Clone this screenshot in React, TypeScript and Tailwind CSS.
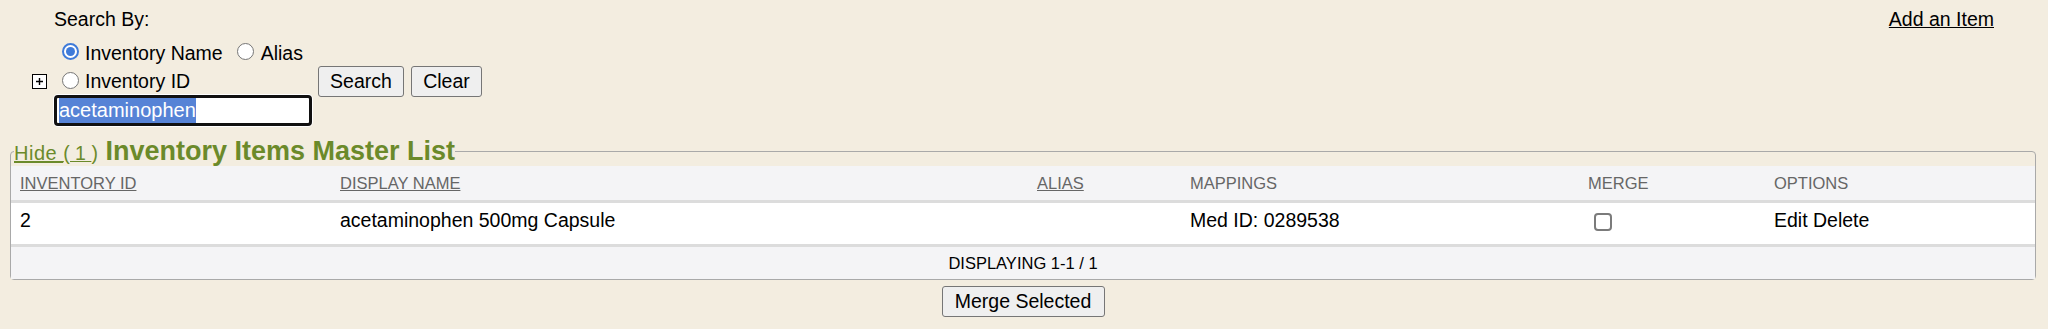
import React from "react";

const Radio = ({ checked }: { checked?: boolean }) =>
  checked ? (
    <span className="inline-flex w-[17px] h-[17px] rounded-full border-[2px] border-[#3f7bd9] bg-white items-center justify-center">
      <span className="block w-[9px] h-[9px] rounded-full bg-[#3f7bd9]" />
    </span>
  ) : (
    <span className="inline-block w-[17px] h-[17px] rounded-full border border-[#767676] bg-white" />
  );

const PlusBox = () => (
  <svg width="15" height="15" viewBox="0 0 15 15" className="shrink-0">
    <rect x="0.5" y="0.5" width="14" height="14" fill="#ffffff" stroke="#000000" strokeWidth="1" />
    <path d="M4 7.5H11M7.5 4V11" stroke="#000000" strokeWidth="1.4" />
  </svg>
);

const Button = ({ children, w }: { children: React.ReactNode; w: string }) => (
  <button
    className={`${w} h-[31px] bg-[#efefef] border border-[#767676] rounded-[3px] text-[19.5px] leading-[23px] text-black flex items-center justify-center`}
  >
    {children}
  </button>
);

const th = "pl-[9px] text-left font-normal align-middle h-[37px] border-b-[3px] border-[#dcdcdc] bg-[#f4f4f6]";
const td = "pl-[9px] align-top pt-[6px] h-[44px] border-b-[3px] border-[#dcdcdc] bg-white";

export default function App() {
  return (
    <div className="w-full min-h-[329px] bg-[#f3ede0] text-black font-['Liberation_Sans',Arial,sans-serif]">
      <div className="flex justify-between">
        <div className="pl-[32px]">
          <div className="pl-[22px] pt-[8px] text-[19.5px] leading-[23px]">Search By:</div>
          <div className="pl-[22px] mt-[11px] flex items-center h-[23px] text-[19.5px] leading-[23px]">
            <span className="ml-[8px] mr-[6px] mb-[4px] flex">
              <Radio checked />
            </span>
            <span>Inventory Name</span>
            <span className="ml-[14px] mr-[7px] mb-[4px] flex">
              <Radio />
            </span>
            <span>Alias</span>
          </div>
          <div className="flex items-center h-[31px] mt-[1px]">
            <div className="w-[22px] flex">
              <PlusBox />
            </div>
            <div className="w-[264px] flex items-center text-[19.5px] leading-[23px]">
              <span className="ml-[8px] mr-[6px] mb-[2px] flex">
                <Radio />
              </span>
              <span>Inventory ID</span>
            </div>
            <Button w="w-[86px]">Search</Button>
            <span className="w-[7px]" />
            <Button w="w-[71px]">Clear</Button>
          </div>
          <div className="pl-[22px] -mt-[2px] mb-[1px]">
            <div className="w-[258px] h-[31px] border-[3px] border-[#111111] rounded-[4px] bg-white shadow-[0_0_0_1px_#ffffff] flex items-center pl-[2px]">
              <span className="bg-[#5683d6] text-white text-[20px] leading-[25px] h-[25px]">acetaminophen</span>
            </div>
          </div>
        </div>
        <a className="mr-[54px] mt-[8px] text-[19.5px] leading-[23px] underline text-black h-[23px]">Add an Item</a>
      </div>

      <fieldset className="mt-[9px] ml-[10px] mr-[12px] border border-[#a9a9a9] rounded-[4px] p-0 min-w-0">
        <legend className="ml-[3px] px-0 h-[30px] leading-[30px] text-[#6b8a2a] whitespace-nowrap">
          <span className="text-[20px] tracking-[0.5px] underline">Hide </span>
          <span className="text-[19.5px] underline">( 1 </span>
          <span className="text-[19.5px]">)</span>
          <span className="text-[27px] font-bold"> Inventory Items Master List</span>
        </legend>
        <table className="w-full table-fixed border-separate border-spacing-0">
          <colgroup>
            <col className="w-[320px]" />
            <col className="w-[697px]" />
            <col className="w-[153px]" />
            <col className="w-[398px]" />
            <col className="w-[186px]" />
            <col />
          </colgroup>
          <thead>
            <tr className="text-[16.5px] leading-[19px] text-[#666666]">
              <th className={th}>
                <span className="underline">INVENTORY ID</span>
              </th>
              <th className={th}>
                <span className="underline">DISPLAY NAME</span>
              </th>
              <th className={th}>
                <span className="underline">ALIAS</span>
              </th>
              <th className={th}>MAPPINGS</th>
              <th className={th}>MERGE</th>
              <th className={th}>OPTIONS</th>
            </tr>
          </thead>
          <tbody>
            <tr className="text-[19.5px] leading-[23px]">
              <td className={td}>2</td>
              <td className={td}>acetaminophen 500mg Capsule</td>
              <td className={td}></td>
              <td className={td}>Med ID: 0289538</td>
              <td className="pl-[15px] align-top pt-[10px] h-[44px] border-b-[3px] border-[#dcdcdc] bg-white">
                <span className="block w-[18px] h-[18px] rounded-[4px] border-[2px] border-[#7b7b7b] bg-white" />
              </td>
              <td className={td}>Edit Delete</td>
            </tr>
            <tr>
              <td
                colSpan={6}
                className="h-[32px] bg-[#f4f4f6] text-center align-middle text-[16.5px] leading-[19px]"
              >
                DISPLAYING 1-1 / 1
              </td>
            </tr>
          </tbody>
        </table>
      </fieldset>

      <div className="ml-[10px] mr-[12px] mt-[6px] flex justify-center">
        <Button w="w-[163px]">Merge Selected</Button>
      </div>
    </div>
  );
}
